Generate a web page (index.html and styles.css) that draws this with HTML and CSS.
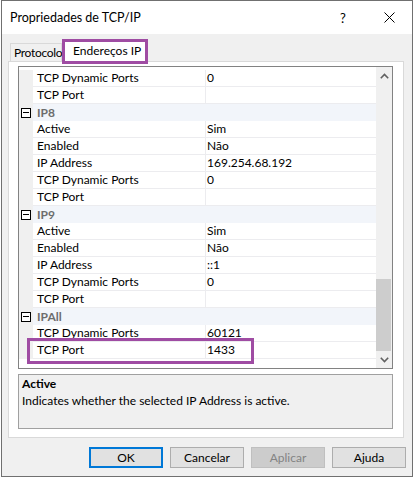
FILE: index.html
```html
<!DOCTYPE html>
<html>
<head>
<meta charset="utf-8">
<link rel="stylesheet" href="styles.css">
</head>
<body>
<div class="window">
  <div class="titlebar">
    <span class="title">Propriedades de TCP/IP</span>
    <span class="tbtn help">?</span>
    <span class="tbtn close"><svg width="11" height="11" viewBox="0 0 11 11"><path d="M0.5 0.5 L10.5 10.5 M10.5 0.5 L0.5 10.5" stroke="#000" stroke-width="1" fill="none"/></svg></span>
  </div>
  <div class="content">
    <div class="tabs">
      <div class="tab">Protocolo</div>
      <div class="tab active">Endereços IP</div>
    </div>
    <div class="panel">
      <div class="grid">
        <div class="rows">
          <div class="row"><div class="gut"></div><div class="name">TCP Dynamic Ports</div><div class="val">0</div></div>
          <div class="row"><div class="gut"></div><div class="name">TCP Port</div><div class="val"></div></div>
          <div class="row cat"><div class="gut"><span class="minus"></span></div><div class="catname">IP8</div></div>
          <div class="row"><div class="gut"></div><div class="name">Active</div><div class="val">Sim</div></div>
          <div class="row"><div class="gut"></div><div class="name">Enabled</div><div class="val">Não</div></div>
          <div class="row"><div class="gut"></div><div class="name">IP Address</div><div class="val">169.254.68.192</div></div>
          <div class="row"><div class="gut"></div><div class="name">TCP Dynamic Ports</div><div class="val">0</div></div>
          <div class="row"><div class="gut"></div><div class="name">TCP Port</div><div class="val"></div></div>
          <div class="row cat"><div class="gut"><span class="minus"></span></div><div class="catname">IP9</div></div>
          <div class="row"><div class="gut"></div><div class="name">Active</div><div class="val">Sim</div></div>
          <div class="row"><div class="gut"></div><div class="name">Enabled</div><div class="val">Não</div></div>
          <div class="row"><div class="gut"></div><div class="name">IP Address</div><div class="val">::1</div></div>
          <div class="row"><div class="gut"></div><div class="name">TCP Dynamic Ports</div><div class="val">0</div></div>
          <div class="row"><div class="gut"></div><div class="name">TCP Port</div><div class="val"></div></div>
          <div class="row cat"><div class="gut"><span class="minus"></span></div><div class="catname">IPAll</div></div>
          <div class="row"><div class="gut"></div><div class="name">TCP Dynamic Ports</div><div class="val">60121</div></div>
          <div class="row mark"><div class="gut"></div><div class="name">TCP Port</div><div class="val">1433</div></div>
        </div>
        <div class="scrollbar">
          <div class="arrow"><svg width="9" height="6" viewBox="0 0 9 6"><path d="M0.8 5.2 L4.5 1.5 L8.2 5.2" stroke="#606060" stroke-width="1.6" fill="none"/></svg></div>
          <div class="track"><div class="thumb"></div></div>
          <div class="arrow"><svg width="9" height="6" viewBox="0 0 9 6"><path d="M0.8 0.8 L4.5 4.5 L8.2 0.8" stroke="#606060" stroke-width="1.6" fill="none"/></svg></div>
        </div>
      </div>
      <div class="desc">
        <div class="desc-title">Active</div>
        <div class="desc-text">Indicates whether the selected IP Address is active.</div>
      </div>
    </div>
    <div class="buttons">
      <div class="btn default">OK</div>
      <div class="btn">Cancelar</div>
      <div class="btn disabled">Aplicar</div>
      <div class="btn">Ajuda</div>
    </div>
  </div>
</div>
</body>
</html>
```

FILE: styles.css
```css
*, *::before, *::after { box-sizing: border-box; }
body {
  margin: 0;
  background: #ffffff;
  font-family: Lato, "Noto Sans", sans-serif;
  font-size: 12px;
  color: #000;
}
.window {
  margin-left: 1px;
  width: 412px;
  height: 477px;
  border: 1px solid #707070;
  background: #f0f0f0;
  display: flex;
  flex-direction: column;
}
.titlebar {
  height: 33px;
  background: #fff;
  display: flex;
  align-items: center;
  padding-left: 8px;
}
.title { flex: 1; font-size: 12.5px; }
.tbtn {
  width: 46px;
  height: 33px;
  display: flex;
  align-items: center;
  justify-content: center;
}
.help { font-size: 13px; }
.content {
  display: flex;
  flex-direction: column;
  padding-top: 5px;
}
.tabs {
  display: flex;
  align-items: flex-end;
  height: 22px;
  padding-left: 8px;
  position: relative;
  z-index: 2;
}
.tab {
  height: 18px;
  width: 52px;
  border: 1px solid #d9d9d9;
  border-bottom: none;
  background: #f0f0f0;
  padding-left: 3px;
  line-height: 17px;
  letter-spacing: -0.3px;
  white-space: nowrap;
}
.tab.active {
  position: relative;
  width: 86px;
  height: 25px;
  margin-bottom: -3px;
  border: 3px solid #9f4ca3;
  background: #fff;
  padding-left: 8px;
  line-height: 18px;
  letter-spacing: 0;
}
.panel {
  margin-left: 6px;
  width: 396px;
  height: 377px;
  border: 1px solid #d9d9d9;
  background: #fff;
  padding: 4px 10px 8px 9px;
  display: flex;
  flex-direction: column;
}
.grid {
  height: 303px;
  border: 1px solid #828282;
  display: flex;
  background: #fff;
}
.rows {
  flex: 1;
  padding-top: 3px;
  display: flex;
  flex-direction: column;
}
.row {
  display: grid;
  grid-template-columns: 14px 173px 1fr;
  height: 17px;
  position: relative;
}
.gut { background: #f0f0f0; display: flex; align-items: center; }
.name {
  border-bottom: 1px solid #ececef;
  border-right: 1px solid #ececef;
  padding-left: 4px;
  line-height: 16px;
  white-space: nowrap;
}
.val {
  border-bottom: 1px solid #ececef;
  padding-left: 1px;
  line-height: 16px;
}
.row.cat .catname {
  grid-column: 2 / 4;
  background: #f2f5fa;
  color: #6d6d6d;
  font-weight: bold;
  padding-left: 4px;
  line-height: 17px;
}
.minus {
  display: block;
  width: 10px;
  height: 10px;
  margin-left: 2px;
  border: 1px solid #000;
  background: #fff;
  position: relative;
}
.minus::after {
  content: "";
  position: absolute;
  left: 1px;
  top: 3px;
  width: 6px;
  height: 1px;
  background: #000;
}
.row.mark::after {
  content: "";
  position: absolute;
  left: 8px;
  top: -4px;
  width: 227px;
  height: 26px;
  border: 3px solid #9f4ca3;
}
.scrollbar {
  width: 16px;
  background: #f0f0f0;
  display: flex;
  flex-direction: column;
}
.arrow {
  height: 17px;
  display: flex;
  align-items: center;
  justify-content: center;
}
.track { flex: 1; }
.thumb {
  margin-top: 195px;
  margin-right: 1px;
  height: 72px;
  background: #cdcdcd;
}
.desc {
  margin-top: 5px;
  height: 55px;
  border: 1px solid #a0a0a0;
  background: #f0f0f0;
  padding-left: 3px;
}
.desc-title { font-weight: bold; line-height: 17px; }
.desc-text { line-height: 17px; }
.buttons {
  margin-top: 9px;
  display: flex;
  justify-content: flex-end;
  gap: 7px;
  padding-right: 6px;
}
.btn {
  width: 74px;
  height: 21px;
  border: 1px solid #adadad;
  background: #e1e1e1;
  display: flex;
  align-items: center;
  justify-content: center;
}
.btn.default { border: 2px solid #0078d7; }
.btn.disabled { background: #cccccc; border-color: #bfbfbf; color: #838383; }
```
